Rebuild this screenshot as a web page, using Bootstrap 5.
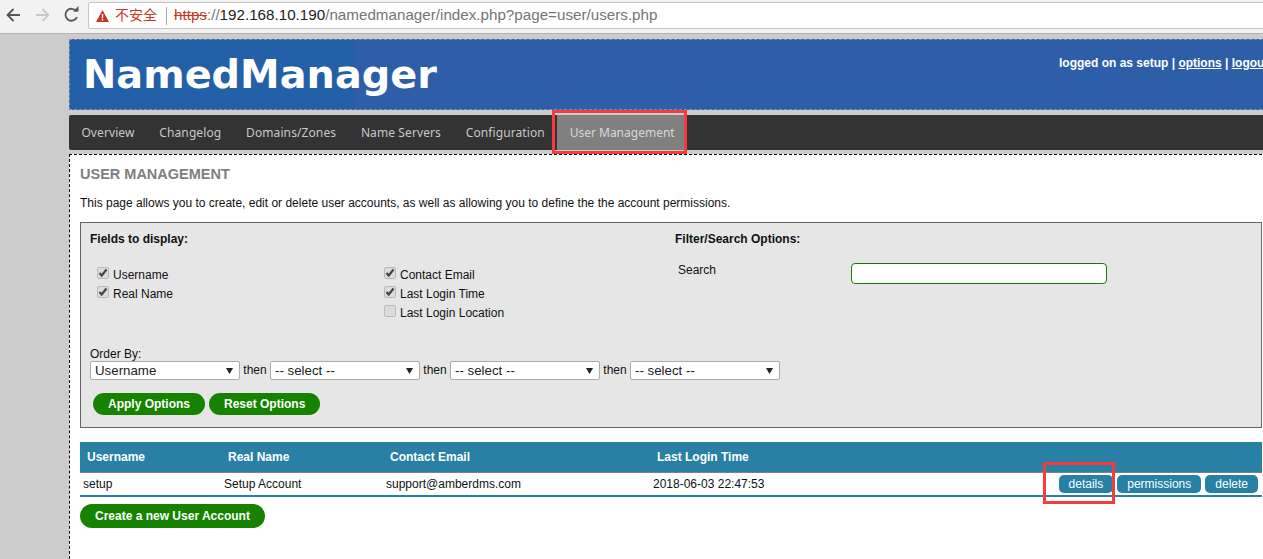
<!DOCTYPE html>
<html lang="en">
<head>
    <meta charset="UTF-8">
    <meta name="viewport" content="width=device-width, initial-scale=1.0">
    <title>NamedManager</title>
    <link href="https://cdn.jsdelivr.net/npm/bootstrap@5.3.0/dist/css/bootstrap.min.css" rel="stylesheet">
    <style>
        html, body { height: 100%; }
        body {
            background-color: #cccccc;
            font-family: "Liberation Sans", Arial, sans-serif;
            font-size: 12px;
            color: #111;
            overflow: hidden;
        }
        /* browser chrome */
        .chrome-bar {
            height: 34px;
            background: #f2f2f2;
            border-bottom: 1px solid #b4b4b4;
            padding: 2px 0 0 3px;
        }
        .chrome-btn { width: 22px; height: 26px; margin-right: 7px; flex: none; }
        .url-box {
            height: 27px;
            width: 1300px;
            margin-left: -2px;
            flex: none;
            background: #fff;
            border: 1px solid #c4c4c4;
            border-radius: 2px;
            padding-left: 7px;
            font-size: 15.200px;
            font-family: "Liberation Sans", "Noto Sans CJK SC", sans-serif;
            color: #757575;
        }
        .url-warn { color: #c5392b; font-size: 14px; margin-left: 6px; }
        .url-sep { width: 1px; height: 18px; background: #aaa; margin: 0 7px 0 9px; }
        .url-https { color: #c5392b; text-decoration: line-through; }
        .url-host { color: #222; }

        .page-shell { width: 1203px; margin: 5px 0 0 69px; position: relative; }

        .head-banner {
            height: 71px;
            background: #2f5ea8;
            border: 1px dashed #7f8fa8;
            color: #fff;
        }
        .head-logo {
            width: 284px;
            background: #2460a7;
            padding: 7px 0 0 13px;
            font-family: "DejaVu Sans", sans-serif;
            font-weight: 700;
            font-size: 39.800px;
            line-height: 54px;
        }
        .head-user {
            font-weight: 700;
            padding: 14px 0 0 0;
            width: 212px;
            white-space: nowrap;
        }
        .head-user a { color: #fff; }

        .main-nav {
            height: 35px;
            margin-top: 5px;
            background: #333333;
            border-radius: 2px 0 0 2px;
        }
        .main-nav .nav-link {
            color: #c8c8c8;
            font-family: "Noto Sans", sans-serif;
            font-size: 12px;
            letter-spacing: 0.100px;
            line-height: 35px;
            padding: 0 12.400px;
        }
        .main-nav .nav-link.active { background: #808080; color: #d8d8d8; letter-spacing: 0; padding-right: 10px; }

        .content-area {
            margin-top: 4px;
            height: 420px;
            background: #fff;
            border-top: 1px dashed #000;
            border-left: 1px dashed #000;
            padding: 0 10px;
        }
        .page-title {
            font-size: 14.500px;
            font-weight: 700;
            color: #808080;
            margin: 11px 0 0;
            line-height: 16px;
            font-family: "Liberation Sans", sans-serif;
        }
        .page-intro { margin: 14px 0 0; line-height: 14px; }

        .options-box {
            height: 206px;
            margin-top: 12px;
            background: #e6e6e6;
            border: 1px solid #666;
            padding: 9px 9px 0;
        }
        .opt-head { font-weight: 700; line-height: 14px; }
        .field-col { width: 287px; padding: 20px 0 0 7px; }
        .field-wrap { width: 585px; }
        .field-line { height: 19px; }
        .field-line label { line-height: 19px; margin-left: 5px; }
        .fake-check {
            appearance: none;
            width: 12px;
            height: 12px;
            margin: 0 -1px 6px 0;
            background-color: #dcdcdc;
            border: 1px solid #b9b9b9;
            border-radius: 2px;
            flex: none;
        }
        .fake-check:checked {
            background-image: url("data:image/svg+xml,%3Csvg xmlns='http://www.w3.org/2000/svg' viewBox='0 0 10 10'%3E%3Cpath d='M1.500 5l2.200 2.500 4.800-6' fill='none' stroke='%23444' stroke-width='2.200'/%3E%3C/svg%3E");
        }
        .search-row { padding: 17px 0 0 3px; }
        .search-label { width: 173px; line-height: 14px; }
        .search-input {
            width: 256px;
            height: 21px;
            border: 1px solid #1a7a0a;
            border-radius: 4px;
            background: #fff;
        }
        .order-head { margin-top: 25px; line-height: 13px; }
        .order-row { line-height: 19px; }
        .order-select {
            appearance: none;
            width: 150px;
            height: 19px;
            padding: 0 0 0 4px;
            border: 1px solid #aaa;
            border-radius: 2px;
            font-family: "Liberation Sans", sans-serif;
            font-size: 13.300px;
            line-height: 17px;
            color: #222;
            background: #fff url("data:image/svg+xml,%3Csvg xmlns='http://www.w3.org/2000/svg' viewBox='0 0 7 6'%3E%3Cpath d='M0 0h7L3.500 6z' fill='%23222'/%3E%3C/svg%3E") no-repeat right 6px center / 7px 6px;
            flex: none;
        }
        .then-word { width: 30px; text-align: center; }
        .green-btn {
            background: #158300;
            color: #fff;
            font-weight: 700;
            font-size: 12px;
            border: 0;
            border-radius: 11px;
            height: 22px;
            line-height: 22px;
            padding: 0 15px;
        }
        .green-btn:hover { background: #158300; color: #fff; }
        .option-btns { padding: 13px 0 0 3px; }

        .user-table { margin: 14px 0 0; width: 100%; }
        .user-table th {
            background: #2880a4;
            color: #fff;
            height: 30px;
            font-size: 12px;
            font-weight: 700;
            padding: 0 0 0 7px;
            border-bottom: 1px solid #808080;
            vertical-align: middle;
        }
        .user-table td {
            height: 24px;
            padding: 0 0 0 3px;
            font-size: 12px;
            color: #111;
            border-bottom: 2px solid #2880a4;
            vertical-align: middle;
        }
        .row-btn {
            background: #2880a4;
            color: #fff;
            font-size: 12px;
            line-height: 18px;
            height: 18px;
            padding: 0 10px;
            border: 0;
            border-radius: 5px;
        }
        .row-btn:hover { background: #2880a4; color: #fff; }
        .create-wrap { margin-top: 7px; }
        .create-btn { height: 24px; line-height: 24px; border-radius: 12px; }

        .note-box {
            position: absolute;
            border: 3px solid #f53b3b;
            pointer-events: none;
        }
        .note-nav { left: 483px; top: 71px; width: 135px; height: 44px; }
        .note-details { left: 974px; top: 423px; width: 72px; height: 42px; }
    </style>
</head>
<body>
    <div class="chrome-bar d-flex align-items-start">
        <svg class="chrome-btn" viewBox="0 0 22 26"><path d="M17 13H5M10.500 7l-6 6 6 6" fill="none" stroke="#555" stroke-width="1.800"/></svg>
        <svg class="chrome-btn" viewBox="0 0 22 26"><path d="M4 13h12M10.500 7l6 6-6 6" fill="none" stroke="#c8c8c8" stroke-width="1.800"/></svg>
        <svg class="chrome-btn" viewBox="0 0 22 26"><path d="M15.500 9.500A6 6 0 1 0 16 15" fill="none" stroke="#555" stroke-width="1.800"/><path d="M12 9.500h5.500V4z" fill="#555"/></svg>
        <div class="url-box d-flex align-items-center">
            <svg width="13" height="12" viewBox="0 0 13 12"><path d="M6.500 0L13 12H0z" fill="#c5392b"/><path d="M5.800 4h1.400v4.200H5.800zM5.800 9h1.400v1.400H5.800z" fill="#fff"/></svg>
            <span class="url-warn">不安全</span>
            <span class="url-sep"></span>
            <span><span class="url-https">https</span>://<span class="url-host">192.168.10.190</span>/namedmanager/index.php?page=user/users.php</span>
        </div>
    </div>

    <div class="page-shell">
        <div class="head-banner d-flex justify-content-between">
            <div class="head-logo">NamedManager</div>
            <div class="head-user">logged on as setup | <a href="#">options</a> | <a href="#">logout</a></div>
        </div>

        <ul class="nav main-nav">
            <li class="nav-item"><a class="nav-link" href="#">Overview</a></li>
            <li class="nav-item"><a class="nav-link" href="#">Changelog</a></li>
            <li class="nav-item"><a class="nav-link" href="#">Domains/Zones</a></li>
            <li class="nav-item"><a class="nav-link" href="#">Name Servers</a></li>
            <li class="nav-item"><a class="nav-link" href="#">Configuration</a></li>
            <li class="nav-item"><a class="nav-link active" href="#">User Management</a></li>
        </ul>

        <div class="content-area">
            <h3 class="page-title">USER MANAGEMENT</h3>
            <p class="page-intro">This page allows you to create, edit or delete user accounts, as well as allowing you to define the the account permissions.</p>

            <form class="options-box">
                <div class="d-flex">
                    <div class="field-wrap">
                        <div class="opt-head">Fields to display:</div>
                        <div class="d-flex">
                            <div class="field-col">
                                <div class="field-line d-flex align-items-center"><input class="fake-check" type="checkbox" id="f1" checked><label for="f1">Username</label></div>
                                <div class="field-line d-flex align-items-center"><input class="fake-check" type="checkbox" id="f2" checked><label for="f2">Real Name</label></div>
                            </div>
                            <div class="field-col">
                                <div class="field-line d-flex align-items-center"><input class="fake-check" type="checkbox" id="f3" checked><label for="f3">Contact Email</label></div>
                                <div class="field-line d-flex align-items-center"><input class="fake-check" type="checkbox" id="f4" checked><label for="f4">Last Login Time</label></div>
                                <div class="field-line d-flex align-items-center"><input class="fake-check" type="checkbox" id="f5"><label for="f5">Last Login Location</label></div>
                            </div>
                        </div>
                    </div>
                    <div>
                        <div class="opt-head">Filter/Search Options:</div>
                        <div class="search-row d-flex align-items-start">
                            <label class="search-label" for="searchbox">Search</label>
                            <input class="search-input" id="searchbox" type="text">
                        </div>
                    </div>
                </div>

                <div class="order-head">Order By:</div>
                <div class="order-row d-flex">
                    <select class="order-select"><option>Username</option></select>
                    <span class="then-word">then</span>
                    <select class="order-select"><option>-- select --</option></select>
                    <span class="then-word">then</span>
                    <select class="order-select"><option>-- select --</option></select>
                    <span class="then-word">then</span>
                    <select class="order-select"><option>-- select --</option></select>
                </div>
                <div class="option-btns d-flex gap-1">
                    <button type="button" class="btn green-btn">Apply Options</button>
                    <button type="button" class="btn green-btn">Reset Options</button>
                </div>
            </form>

            <table class="user-table">
                <thead>
                    <tr>
                        <th style="width: 141px">Username</th>
                        <th style="width: 162px">Real Name</th>
                        <th style="width: 267px">Contact Email</th>
                        <th style="width: 299px">Last Login Time</th>
                        <th></th>
                    </tr>
                </thead>
                <tbody>
                    <tr>
                        <td>setup</td>
                        <td>Setup Account</td>
                        <td>support@amberdms.com</td>
                        <td>2018-06-03 22:47:53</td>
                        <td>
                            <div class="d-flex justify-content-end gap-1 me-1">
                                <button type="button" class="btn row-btn">details</button>
                                <button type="button" class="btn row-btn">permissions</button>
                                <button type="button" class="btn row-btn">delete</button>
                            </div>
                        </td>
                    </tr>
                </tbody>
            </table>

            <div class="create-wrap">
                <button type="button" class="btn green-btn create-btn">Create a new User Account</button>
            </div>
        </div>

        <div class="note-box note-nav"></div>
        <div class="note-box note-details"></div>
    </div>
</body>
</html>
